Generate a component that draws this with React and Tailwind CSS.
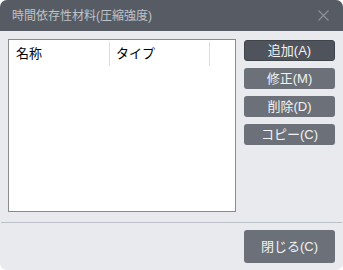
export default function App() {
  const font = { fontFamily: '"Liberation Sans", "Noto Sans CJK JP", sans-serif' };
  return (
    <div className="w-[343px] h-[270px] bg-white" style={font}>
      <div className="w-[343px] h-[270px] rounded-[7px] overflow-hidden bg-[#e9eaee] flex flex-col">
        <div className="h-[31px] bg-[#575c64] flex items-center justify-between pl-[12px] pr-[12px] shrink-0">
          <span className="text-[12px] text-[#bfc3c8] leading-none">時間依存性材料(圧縮強度)</span>
          <svg width="11" height="11" viewBox="0 0 11 11" className="mr-[2px]">
            <path d="M0.5 0.5 L10.5 10.5 M10.5 0.5 L0.5 10.5" stroke="#8d9197" strokeWidth="1.1" />
          </svg>
        </div>
        <div className="flex pt-[8px] pl-[8px] gap-[8px]">
          <div className="w-[228px] h-[173px] bg-white border border-[#8b8b8d]">
            <div className="flex h-[26px] pt-[2px]">
              <div className="w-[101px] border-r border-[#dcdcdc] pl-[7px] flex items-center text-[13px] text-black">名称</div>
              <div className="w-[100px] border-r border-[#dcdcdc] pl-[6px] flex items-center text-[13px] text-black">タイプ</div>
            </div>
          </div>
          <div className="flex flex-col gap-[7px] pt-[1px]">
            <button className="w-[91px] h-[21px] rounded-[3px] bg-[#4f545c] border border-[#3f434a] text-[13px] text-[#f2f2f2] flex items-center justify-center leading-none">追加(A)</button>
            <button className="w-[91px] h-[21px] rounded-[3px] bg-[#6b7079] text-[13px] text-[#f2f2f2] flex items-center justify-center leading-none">修正(M)</button>
            <button className="w-[91px] h-[21px] rounded-[3px] bg-[#6b7079] text-[13px] text-[#f2f2f2] flex items-center justify-center leading-none">削除(D)</button>
            <button className="w-[91px] h-[21px] rounded-[3px] bg-[#6b7079] text-[13px] text-[#f2f2f2] flex items-center justify-center leading-none">コピー(C)</button>
          </div>
        </div>
        <div className="mt-[10px] mx-[1px] h-px bg-[#bcc2c9]"></div>
        <div className="flex justify-end pr-[8px] pt-[7px]">
          <button className="w-[91px] h-[33px] rounded-[3px] bg-[#6b7079] text-[13px] text-[#f2f2f2] flex items-center justify-center leading-none">閉じる(C)</button>
        </div>
      </div>
    </div>
  );
}
